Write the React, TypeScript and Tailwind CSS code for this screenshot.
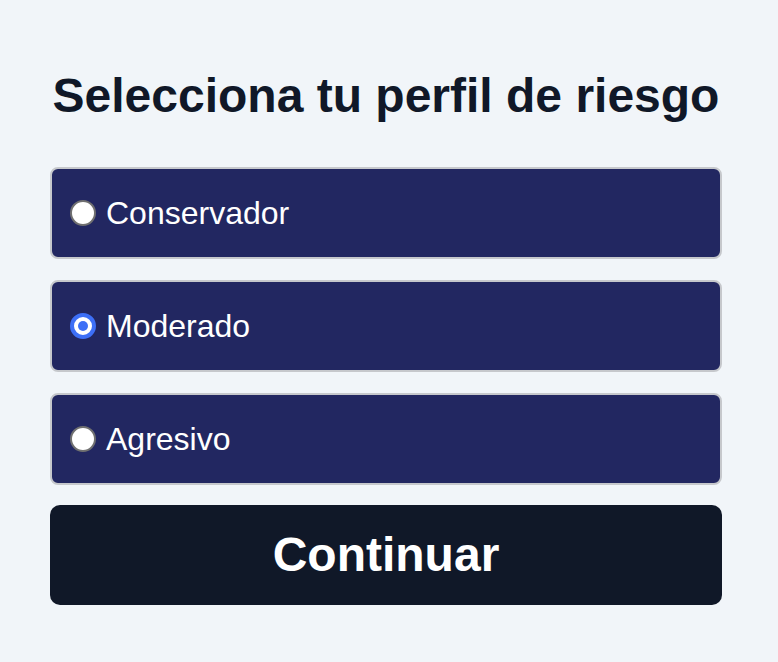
import React, { useState } from 'react';

const OPTIONS = ['Conservador', 'Moderado', 'Agresivo'];

const App: React.FC = () => {
  const [perfil, setPerfil] = useState('Moderado');

  return (
    <div className="min-h-screen bg-[#f1f5f9] px-[50px] pt-[68px] font-['Liberation_Sans',Arial,sans-serif]">
      <div className="w-[672px]">
        <h1 className="text-center text-[48px] leading-[56px] font-bold text-gray-900 mb-[43px]">
          Selecciona tu perfil de riesgo
        </h1>

        <div className="flex flex-col gap-[21px]">
          {OPTIONS.map((op) => {
            const checked = perfil === op;
            return (
              <label
                key={op}
                className="h-[92px] flex items-center px-[18px] bg-[#222761] border-2 border-[#c6c8cc] rounded-lg cursor-pointer"
              >
                <input
                  type="radio"
                  name="perfil"
                  value={op}
                  checked={checked}
                  onChange={() => setPerfil(op)}
                  className="sr-only"
                />
                {checked ? (
                  <span className="w-[26px] h-[26px] rounded-full border-[4px] border-[#3d6ff6] bg-white flex items-center justify-center shrink-0">
                    <span className="w-[10px] h-[10px] rounded-full bg-[#3d6ff6]" />
                  </span>
                ) : (
                  <span className="w-[26px] h-[26px] rounded-full border-2 border-[#707070] bg-white shrink-0" />
                )}
                <span className="ml-[10px] text-[32px] text-white leading-none">{op}</span>
              </label>
            );
          })}
        </div>

        <button
          type="button"
          className="mt-[20px] w-full h-[100px] rounded-[10px] bg-gray-900 text-white text-[48px] font-bold"
        >
          Continuar
        </button>
      </div>
    </div>
  );
};

export default App;
